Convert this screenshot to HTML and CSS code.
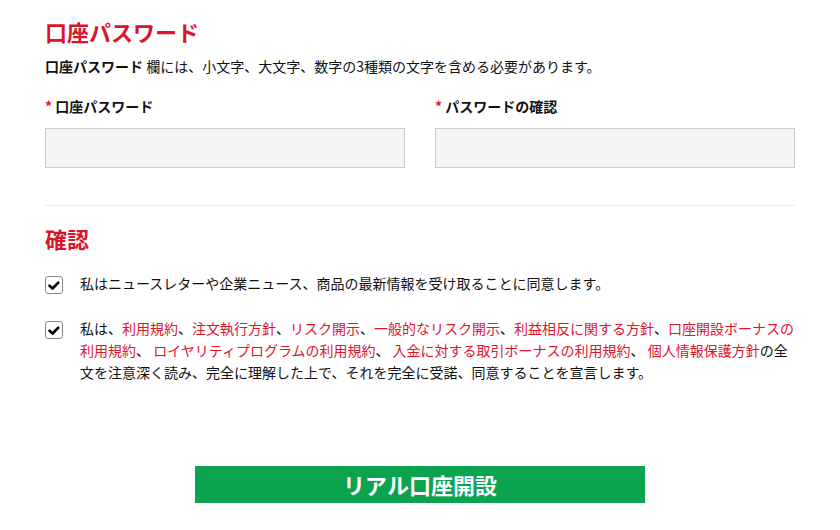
FILE: index.html
```html
<!DOCTYPE html>
<html lang="ja">
<head>
<meta charset="utf-8">
<title>口座パスワード</title>
<link rel="stylesheet" href="styles.css">
</head>
<body>
<div class="page">
  <section class="section">
    <h2 class="heading">口座パスワード</h2>
    <p class="desc"><strong>口座パスワード</strong> 欄には、小文字、大文字、数字の3種類の文字を含める必要があります。</p>
    <div class="fields">
      <div class="field">
        <label class="label"><span class="req">*</span> 口座パスワード</label>
        <input class="input" type="password">
      </div>
      <div class="field">
        <label class="label"><span class="req">*</span> パスワードの確認</label>
        <input class="input" type="password">
      </div>
    </div>
  </section>
  <hr class="divider">
  <section class="section">
    <h2 class="heading">確認</h2>
    <div class="check-row first">
      <span class="box"><svg viewBox="0 0 18 18" width="18" height="18"><path d="M4 9.2 L7.4 12.4 L13.8 5.8" fill="none" stroke="#000" stroke-width="3" stroke-linecap="round" stroke-linejoin="round"/></svg></span>
      <p class="check-text">私はニュースレターや企業ニュース、商品の最新情報を受け取ることに同意します。</p>
    </div>
    <div class="check-row second">
      <span class="box"><svg viewBox="0 0 18 18" width="18" height="18"><path d="M4 9.2 L7.4 12.4 L13.8 5.8" fill="none" stroke="#000" stroke-width="3" stroke-linecap="round" stroke-linejoin="round"/></svg></span>
      <p class="check-text">私は、<a class="link">利用規約</a>、<a class="link">注文執行方針</a>、<a class="link">リスク開示</a>、<a class="link">一般的なリスク開示</a>、<a class="link">利益相反に関する方針</a>、<a class="link">口座開設ボーナスの利用規約</a>、 <a class="link">ロイヤリティプログラムの利用規約</a>、 <a class="link">入金に対する取引ボーナスの利用規約</a>、 <a class="link">個人情報保護方針</a>の全文を注意深く読み、完全に理解した上で、それを完全に受諾、同意することを宣言します。</p>
    </div>
  </section>
  <div class="actions">
    <button class="submit" type="button">リアル口座開設</button>
  </div>
</div>
</body>
</html>
```

FILE: styles.css
```css
html, body {
  margin: 0;
  padding: 0;
  background: #fff;
}
body {
  font-family: "Noto Sans CJK JP", "Noto Sans", sans-serif;
  color: #111;
}
.page {
  width: 750px;
  padding: 18px 45px 0;
}
.heading {
  margin: 0;
  font-size: 22px;
  line-height: 26px;
  font-weight: 700;
  color: #d9152c;
}
.desc {
  margin: 12px 0 0;
  font-size: 14px;
  line-height: 20px;
}
.desc strong {
  font-weight: 700;
}
.fields {
  display: grid;
  grid-template-columns: 360px 360px;
  column-gap: 30px;
  margin-top: 20px;
}
.field {
  display: flex;
  flex-direction: column;
}
.label {
  font-size: 14px;
  line-height: 20px;
  font-weight: 700;
  margin-bottom: 12px;
}
.req {
  color: #d9152c;
}
.input {
  box-sizing: border-box;
  height: 40px;
  width: 100%;
  margin: 0;
  border: 1px solid #cccccc;
  background: #f5f5f5;
  border-radius: 0;
  outline: none;
}
.divider {
  margin: 37px 0 0;
  border: 0;
  height: 1px;
  background: #ececec;
}
.divider + .section .heading {
  margin-top: 19px;
}
.check-row {
  display: flex;
  align-items: flex-start;
}
.check-row.first {
  margin-top: 21px;
}
.check-row.second {
  margin-top: 23px;
}
.box {
  flex: none;
  box-sizing: border-box;
  width: 18px;
  height: 18px;
  margin-top: 4px;
  margin-right: 17px;
  border: 1px solid #8a8a8a;
  border-radius: 3px;
  background: #fff;
  display: flex;
  align-items: center;
  justify-content: center;
}
.box svg {
  width: 17px;
  height: 17px;
}
.check-text {
  margin: 0;
  width: 716px;
  font-size: 14px;
  line-height: 22px;
}
.link {
  color: #e0142d;
  text-decoration: none;
}
.actions {
  display: flex;
  justify-content: center;
  margin-top: 83px;
}
.submit {
  width: 450px;
  height: 37px;
  border: 0;
  background: #0ca34f;
  color: #fff;
  font-family: "Noto Sans CJK JP", "Noto Sans", sans-serif;
  font-size: 22px;
  line-height: 37px;
  font-weight: 700;
  padding: 0;
}
```
